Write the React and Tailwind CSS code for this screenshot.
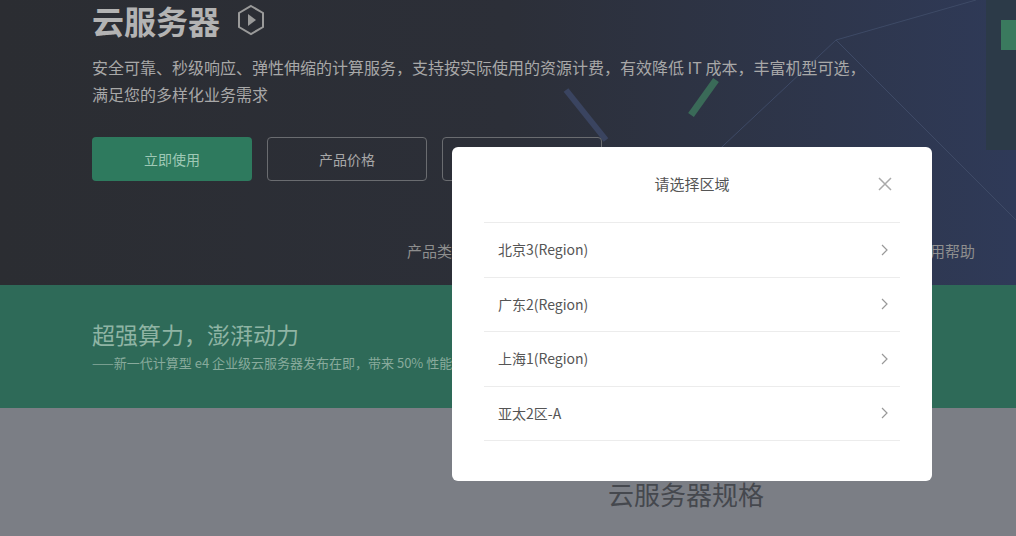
import React from "react";

const regions = ["北京3(Region)", "广东2(Region)", "上海1(Region)", "亚太2区-A"];

const App = () => {
  return (
    <div
      className="relative w-[1016px] h-[536px] overflow-hidden"
      style={{ fontFamily: '"Noto Sans CJK SC", "Noto Sans", sans-serif' }}
    >
      {/* Hero (dimmed) */}
      <div className="h-[285px] bg-gradient-to-r from-[#2b2d32] via-[#2c2f38] to-[#2f3a58] relative overflow-hidden">
        <svg className="absolute right-0 top-0" width="600" height="285" viewBox="0 0 600 285">
          <path d="M260 190 L420 40 L560 0" stroke="#3e4a66" strokeWidth="1" fill="none" />
          <path d="M420 40 L600 220" stroke="#3e4a66" strokeWidth="1" fill="none" />
          <path d="M150 90 L190 140" stroke="#3a4460" strokeWidth="6" />
          <path d="M300 80 L275 115" stroke="#3a6a58" strokeWidth="7" />
          <rect x="570" y="0" width="30" height="150" fill="#2c3a48" />
          <rect x="585" y="20" width="15" height="30" fill="#3a7a5e" />
        </svg>
        <div className="relative pl-[92px] -translate-y-[4px]">
          <div className="flex items-center gap-4">
            <h1 className="text-[32px] font-bold text-[#b3b3b3] leading-[48px]">云服务器</h1>
            <svg width="30" height="32" viewBox="0 0 30 32">
              <path d="M15 2 L27 9 L27 23 L15 30 L3 23 L3 9 Z" fill="none" stroke="#9a9a9a" strokeWidth="2" />
              <path d="M12 10 L20 16 L12 22 Z" fill="#9a9a9a" />
            </svg>
          </div>
          <p className="mt-[10px] text-[16px] leading-[27px] text-[#a8a8a8] w-[775px]">
            安全可靠、秒级响应、弹性伸缩的计算服务，支持按实际使用的资源计费，有效降低 IT 成本，丰富机型可选，满足您的多样化业务需求
          </p>
          <div className="flex gap-[15px] mt-[29px]">
            <div className="w-[160px] h-[44px] rounded bg-[#2e7a5e] text-[#9fc9b6] text-[14px] flex items-center justify-center">立即使用</div>
            <div className="w-[160px] h-[44px] rounded border border-[#6a6c70] text-[#a8a8a8] text-[14px] flex items-center justify-center">产品价格</div>
            <div className="w-[160px] h-[44px] rounded border border-[#6a6c70]"></div>
          </div>
          <div className="flex justify-between text-[15px] text-[#8e8e8e] mt-[59px] ml-[315px] w-[568px]">
            <span>产品类型</span>
            <span>使用帮助</span>
          </div>
        </div>
      </div>
      {/* Green band */}
      <div className="h-[123px] bg-[#2e6a58] pl-[92px] pt-[34px]">
        <h2 className="text-[23px] text-[#8fb4a4] leading-[30px]">超强算力，澎湃动力</h2>
        <p className="text-[13px] text-[#88aa9c] mt-[4px]">——新一代计算型 e4 企业级云服务器发布在即，带来 50% 性能提升</p>
      </div>
      {/* Gray */}
      <div className="h-[128px] bg-[#7b7e85] pl-[608px] pt-[66px]">
        <h2 className="text-[26px] text-[#45484e]">云服务器规格</h2>
      </div>

      {/* Modal */}
      <div className="absolute left-[452px] top-[147px] w-[480px] h-[334px] bg-white rounded-md px-[32px]">
        <div className="h-[76px] flex items-center justify-center relative border-b border-[#ececec]">
          <span className="text-[15px] text-[#555]">请选择区域</span>
          <svg className="absolute right-[8px] top-[30px]" width="14" height="14" viewBox="0 0 14 14">
            <path d="M1 1 L13 13 M13 1 L1 13" stroke="#aaa" strokeWidth="1.5" />
          </svg>
        </div>
        {regions.map((r) => (
          <div key={r} className="h-[54.5px] flex items-center justify-between border-b border-[#ececec] pl-[14px] pr-[12px]">
            <span className="text-[14px] text-[#555]">{r}</span>
            <svg width="7" height="12" viewBox="0 0 7 12">
              <path d="M1 1 L6 6 L1 11" stroke="#999" strokeWidth="1.2" fill="none" />
            </svg>
          </div>
        ))}
      </div>
    </div>
  );
};

export default App;
